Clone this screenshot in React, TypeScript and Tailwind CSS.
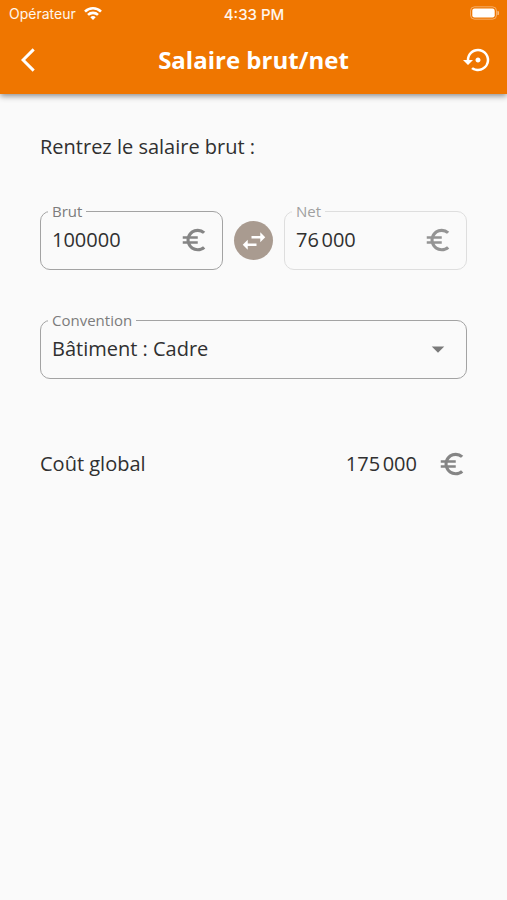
import { useState, type ReactNode } from 'react';
import {
  MdArrowBackIosNew,
  MdArrowDropDown,
  MdEuroSymbol,
  MdSettingsBackupRestore,
  MdSwapHoriz,
} from 'react-icons/md';

const CONVENTIONS = ['Bâtiment : Cadre', 'Bâtiment : ETAM', 'Bâtiment : Ouvrier'];
const DEFAULT_BRUT = '100000';

function formatAmount(value: number) {
  return String(Math.round(value)).replace(/\B(?=(\d{3})+$)/g, '\u202f');
}

function StatusBar() {
  return (
    <div className="grid h-7 grid-cols-3 items-center pr-2 pl-[9px] font-['Inter',sans-serif] text-orange-50">
      <div className="flex items-center gap-2 text-sm">
        <span>Opérateur</span>
        <svg viewBox="0 0 18 13" className="mb-0.5 h-[13px] w-[18px]" fill="none" stroke="white" strokeWidth="2.6">
          <path d="M1 4.6a11.4 11.4 0 0 1 16 0" />
          <path d="M4 7.9a7.2 7.2 0 0 1 10 0" />
          <path d="M9 13 6.3 10.3a3.9 3.9 0 0 1 5.4 0Z" fill="white" stroke="none" />
        </svg>
      </div>
      <span className="text-center text-[15px] font-medium">4:33 PM</span>
      <svg viewBox="0 0 30 14" className="mb-0.5 h-3.5 w-[30px] justify-self-end">
        <rect x="1.5" y="0.8" width="26" height="12.4" rx="4" fill="none" stroke="white" strokeOpacity="0.4" />
        <rect x="3.3" y="2.5" width="22.4" height="9" rx="2.2" fill="white" />
        <path d="M28.4 5v4a2 2 0 0 0 0-4Z" fill="white" fillOpacity="0.5" />
      </svg>
    </div>
  );
}

type FieldProps = {
  id: string;
  label: string;
  disabled?: boolean;
  children: ReactNode;
};

function OutlinedField({ id, label, disabled = false, children }: FieldProps) {
  return (
    <fieldset
      className={`min-w-0 flex-1 rounded-[10px] border pr-[9px] pb-[10px] pl-[7px] ${disabled ? 'border-[#dedede]' : 'border-[#a3a3a3]'}`}
    >
      <legend className={`px-1 text-[15px] leading-5 ${disabled ? 'text-[#a0a0a0]' : 'text-[#7c7c7c]'}`}>
        <label htmlFor={id}>{label}</label>
      </legend>
      <div className="relative flex h-[38px] items-center px-1">{children}</div>
    </fieldset>
  );
}

export default function App() {
  const [brut, setBrut] = useState(DEFAULT_BRUT);
  const [convention, setConvention] = useState(CONVENTIONS[0]);

  const amount = Number(brut) || 0;

  const reset = () => {
    setBrut(DEFAULT_BRUT);
    setConvention(CONVENTIONS[0]);
  };

  return (
    <div className="min-h-screen bg-[#fafafa] font-['Open_Sans',sans-serif] text-xl text-[#303030]">
      <header className="bg-[#ef7600] pb-0.5 text-white shadow-[0_2px_6px_rgba(0,0,0,0.45)]">
        <StatusBar />
        <div className="flex h-16 items-center justify-between px-[14px]">
          <button type="button" aria-label="Retour" className="flex w-8 justify-start">
            <MdArrowBackIosNew className="size-7" />
          </button>
          <h1 className="text-2xl font-bold">Salaire brut/net</h1>
          <button type="button" aria-label="Réinitialiser" onClick={reset} className="flex w-8 justify-end">
            <MdSettingsBackupRestore className="size-[30px]" />
          </button>
        </div>
      </header>

      <main className="px-10 pt-[39px]">
        <p className="leading-7">Rentrez le salaire brut :</p>

        <div className="mt-10 flex items-end gap-[11px]">
          <OutlinedField id="brut" label="Brut">
            <input
              id="brut"
              inputMode="numeric"
              value={brut}
              onChange={(event) => setBrut(event.target.value)}
              className="w-full min-w-0 bg-transparent outline-none"
            />
            <MdEuroSymbol className="size-[30px] shrink-0 text-[#858585]" />
          </OutlinedField>
          <button
            type="button"
            aria-label="Inverser brut et net"
            className="mb-[10px] flex size-[39px] shrink-0 items-center justify-center rounded-full bg-[#a99b90] text-white"
          >
            <MdSwapHoriz className="size-[30px]" />
          </button>
          <OutlinedField id="net" label="Net" disabled>
            <input
              id="net"
              readOnly
              value={formatAmount(amount * 0.76)}
              className="w-full min-w-0 bg-transparent outline-none"
            />
            <MdEuroSymbol className="size-[30px] shrink-0 text-[#949494]" />
          </OutlinedField>
        </div>

        <div className="mt-10 flex">
          <OutlinedField id="convention" label="Convention">
            <select
              id="convention"
              value={convention}
              onChange={(event) => setConvention(event.target.value)}
              className="w-full appearance-none bg-transparent outline-none"
            >
              {CONVENTIONS.map((name) => (
                <option key={name}>{name}</option>
              ))}
            </select>
            <MdArrowDropDown className="pointer-events-none absolute right-1 size-[30px] text-[#7a7a7a]" />
          </OutlinedField>
        </div>

        <div className="mt-[70px] flex items-center">
          <span className="flex-1">Coût global</span>
          <output htmlFor="brut convention">{formatAmount(amount * 1.75)}</output>
          <MdEuroSymbol className="ml-5 size-[30px] text-[#858585]" />
        </div>
      </main>
    </div>
  );
}
